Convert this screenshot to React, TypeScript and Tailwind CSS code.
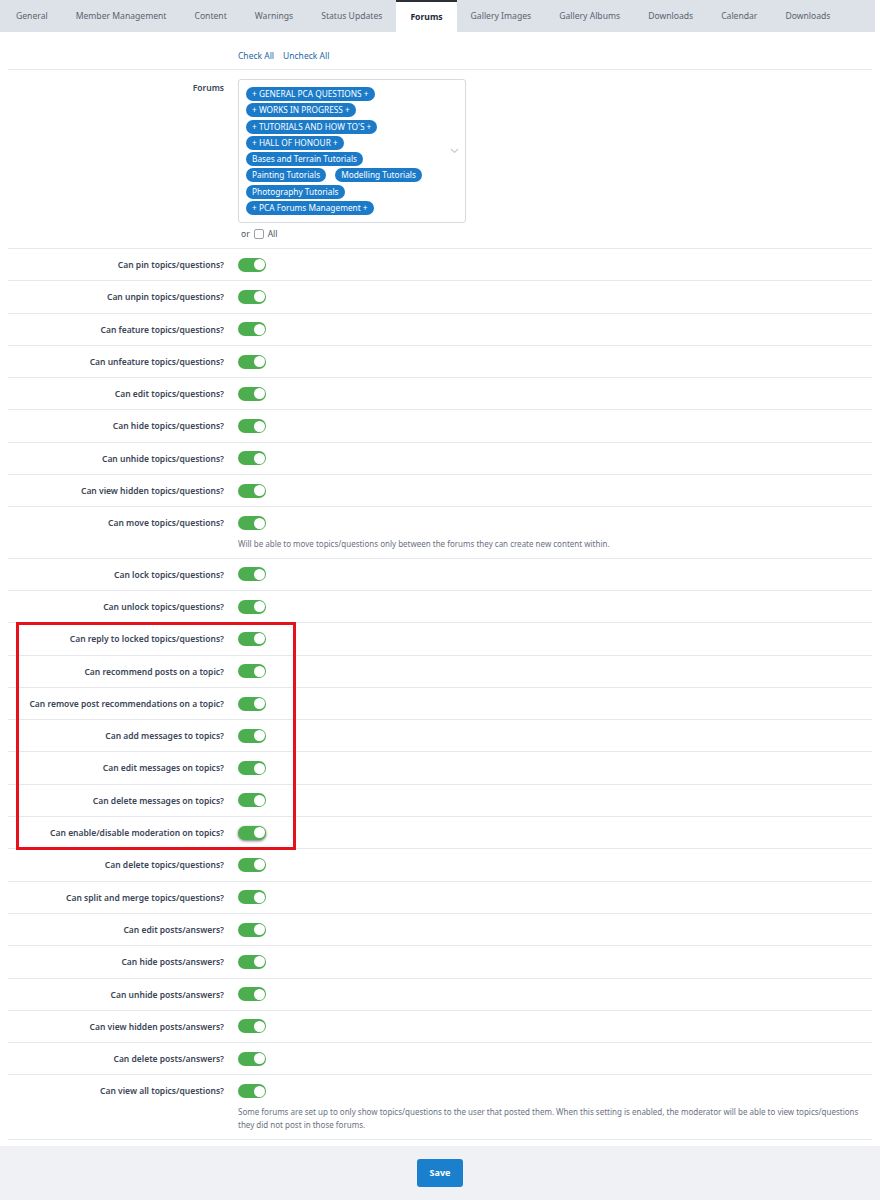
import React from "react";

const tabs = [
  "General",
  "Member Management",
  "Content",
  "Warnings",
  "Status Updates",
  "Forums",
  "Gallery Images",
  "Gallery Albums",
  "Downloads",
  "Calendar",
  "Downloads",
];

const forums = [
  ["+ GENERAL PCA QUESTIONS +"],
  ["+ WORKS IN PROGRESS +"],
  ["+ TUTORIALS AND HOW TO'S +"],
  ["+ HALL OF HONOUR +"],
  ["Bases and Terrain Tutorials"],
  ["Painting Tutorials", "Modelling Tutorials"],
  ["Photography Tutorials"],
  ["+ PCA Forums Management +"],
];

type Perm = { label: string; desc?: string; focus?: boolean };

const before: Perm[] = [
  { label: "Can unpin topics/questions?" },
  { label: "Can feature topics/questions?" },
  { label: "Can unfeature topics/questions?" },
  { label: "Can edit topics/questions?" },
  { label: "Can hide topics/questions?" },
  { label: "Can unhide topics/questions?" },
  { label: "Can view hidden topics/questions?" },
  {
    label: "Can move topics/questions?",
    desc: "Will be able to move topics/questions only between the forums they can create new content within.",
  },
  { label: "Can lock topics/questions?" },
  { label: "Can unlock topics/questions?" },
];

const marked: Perm[] = [
  { label: "Can reply to locked topics/questions?" },
  { label: "Can recommend posts on a topic?" },
  { label: "Can remove post recommendations on a topic?" },
  { label: "Can add messages to topics?" },
  { label: "Can edit messages on topics?" },
  { label: "Can delete messages on topics?" },
  { label: "Can enable/disable moderation on topics?", focus: true },
];

const after: Perm[] = [
  { label: "Can delete topics/questions?" },
  { label: "Can split and merge topics/questions?" },
  { label: "Can edit posts/answers?" },
  { label: "Can hide posts/answers?" },
  { label: "Can unhide posts/answers?" },
  { label: "Can view hidden posts/answers?" },
  { label: "Can delete posts/answers?" },
  {
    label: "Can view all topics/questions?",
    desc: "Some forums are set up to only show topics/questions to the user that posted them. When this setting is enabled, the moderator will be able to view topics/questions they did not post in those forums.",
  },
];

function Toggle({ focus }: { focus?: boolean }) {
  return (
    <span
      className={`flex h-[14px] w-[28px] items-center justify-end rounded-full bg-[#4cae4f] pr-[1.5px] ${
        focus ? "shadow-[0_1px_3px_rgba(0,0,0,0.55)]" : ""
      }`}
    >
      <span className="h-[11px] w-[11px] rounded-full bg-white" />
    </span>
  );
}

function Row({ perm }: { perm: Perm }) {
  return (
    <div className="flex gap-[14px] border-b border-[#e6e8ec] py-[8px]">
      <div className="w-[216px] shrink-0 text-right text-[8.5px] font-semibold leading-[15.3px] text-[#3b4656]">
        {perm.label}
      </div>
      <div className="flex-1 pr-[2px]">
        <div className="flex h-[15.3px] items-center">
          <Toggle focus={perm.focus} />
        </div>
        {perm.desc && (
          <p className="mt-[6px] text-[8px] leading-[13px] text-[#6b7280]">{perm.desc}</p>
        )}
      </div>
    </div>
  );
}

export default function App() {
  return (
    <div className="min-h-[1200px] bg-white font-['Noto_Sans',sans-serif]">
      <div className="mr-[5px] flex h-[32px] items-stretch bg-[#dde1e8] pl-[2px]">
        {tabs.map((t, i) =>
          t === "Forums" ? (
            <div
              key={i}
              className="flex items-center whitespace-nowrap border-t-2 border-[#2b2f36] bg-white px-[14px] text-[8.6px] font-bold text-[#1f2937]"
            >
              {t}
            </div>
          ) : (
            <div
              key={i}
              className="flex items-center whitespace-nowrap px-[14px] text-[8.6px] text-[#5b6370]"
            >
              {t}
            </div>
          )
        )}
      </div>

      <div className="px-2">
        <div className="flex gap-[14px] border-b border-[#e6e8ec] pb-[6px] pt-[16px]">
          <div className="w-[216px] shrink-0" />
          <div className="flex gap-[9px] text-[8.5px] leading-[15px] text-[#2366a8]">
            <span>Check All</span>
            <span>Uncheck All</span>
          </div>
        </div>

        <div className="flex gap-[14px] border-b border-[#e6e8ec] pb-[7px] pt-[9px]">
          <div className="w-[216px] shrink-0 pt-[1px] text-right text-[8.5px] font-semibold leading-[15px] text-[#3b4656]">
            Forums
          </div>
          <div>
            <div className="relative h-[144px] w-[228px] rounded-[3px] border border-[#d5d9e0] px-[7px] pt-[7px]">
              <div className="flex flex-col gap-[2.3px]">
                {forums.map((line, i) => (
                  <div key={i} className="flex gap-[9px]">
                    {line.map((f) => (
                      <span
                        key={f}
                        className="rounded-full bg-[#1b7bc9] px-[6px] text-[8.3px] leading-[14px] text-white"
                      >
                        {f}
                      </span>
                    ))}
                  </div>
                ))}
              </div>
              <svg
                className="absolute right-[6px] top-[68px]"
                width="9"
                height="6"
                viewBox="0 0 9 6"
                fill="none"
              >
                <path d="M1 1l3.5 3.5L8 1" stroke="#c5cad3" strokeWidth="1.2" />
              </svg>
            </div>
            <div className="mt-[4px] flex items-center gap-[4px] pl-[3px] text-[8.5px] leading-[14px] text-[#4b5563]">
              <span>or</span>
              <span className="h-[10px] w-[10px] rounded-[2px] border border-[#9aa1ab] bg-white" />
              <span>All</span>
            </div>
          </div>
        </div>

        <Row perm={{ label: "Can pin topics/questions?" }} />
        {before.map((p) => (
          <Row key={p.label} perm={p} />
        ))}
        <div className="relative">
          {marked.map((p) => (
            <Row key={p.label} perm={p} />
          ))}
          <div className="pointer-events-none absolute -bottom-[1px] -top-[1px] left-[8px] w-[280px] border-[3px] border-[#e5121c]" />
        </div>
        {after.map((p) => (
          <Row key={p.label} perm={p} />
        ))}
      </div>

      <div className="mt-[6px] flex justify-center bg-[#f0f1f4] pb-[20px] pt-[13px]">
        <button className="h-[28px] w-[46px] rounded-[3px] bg-[#1a7fcd] text-[9px] font-bold text-white">
          Save
        </button>
      </div>
    </div>
  );
}
